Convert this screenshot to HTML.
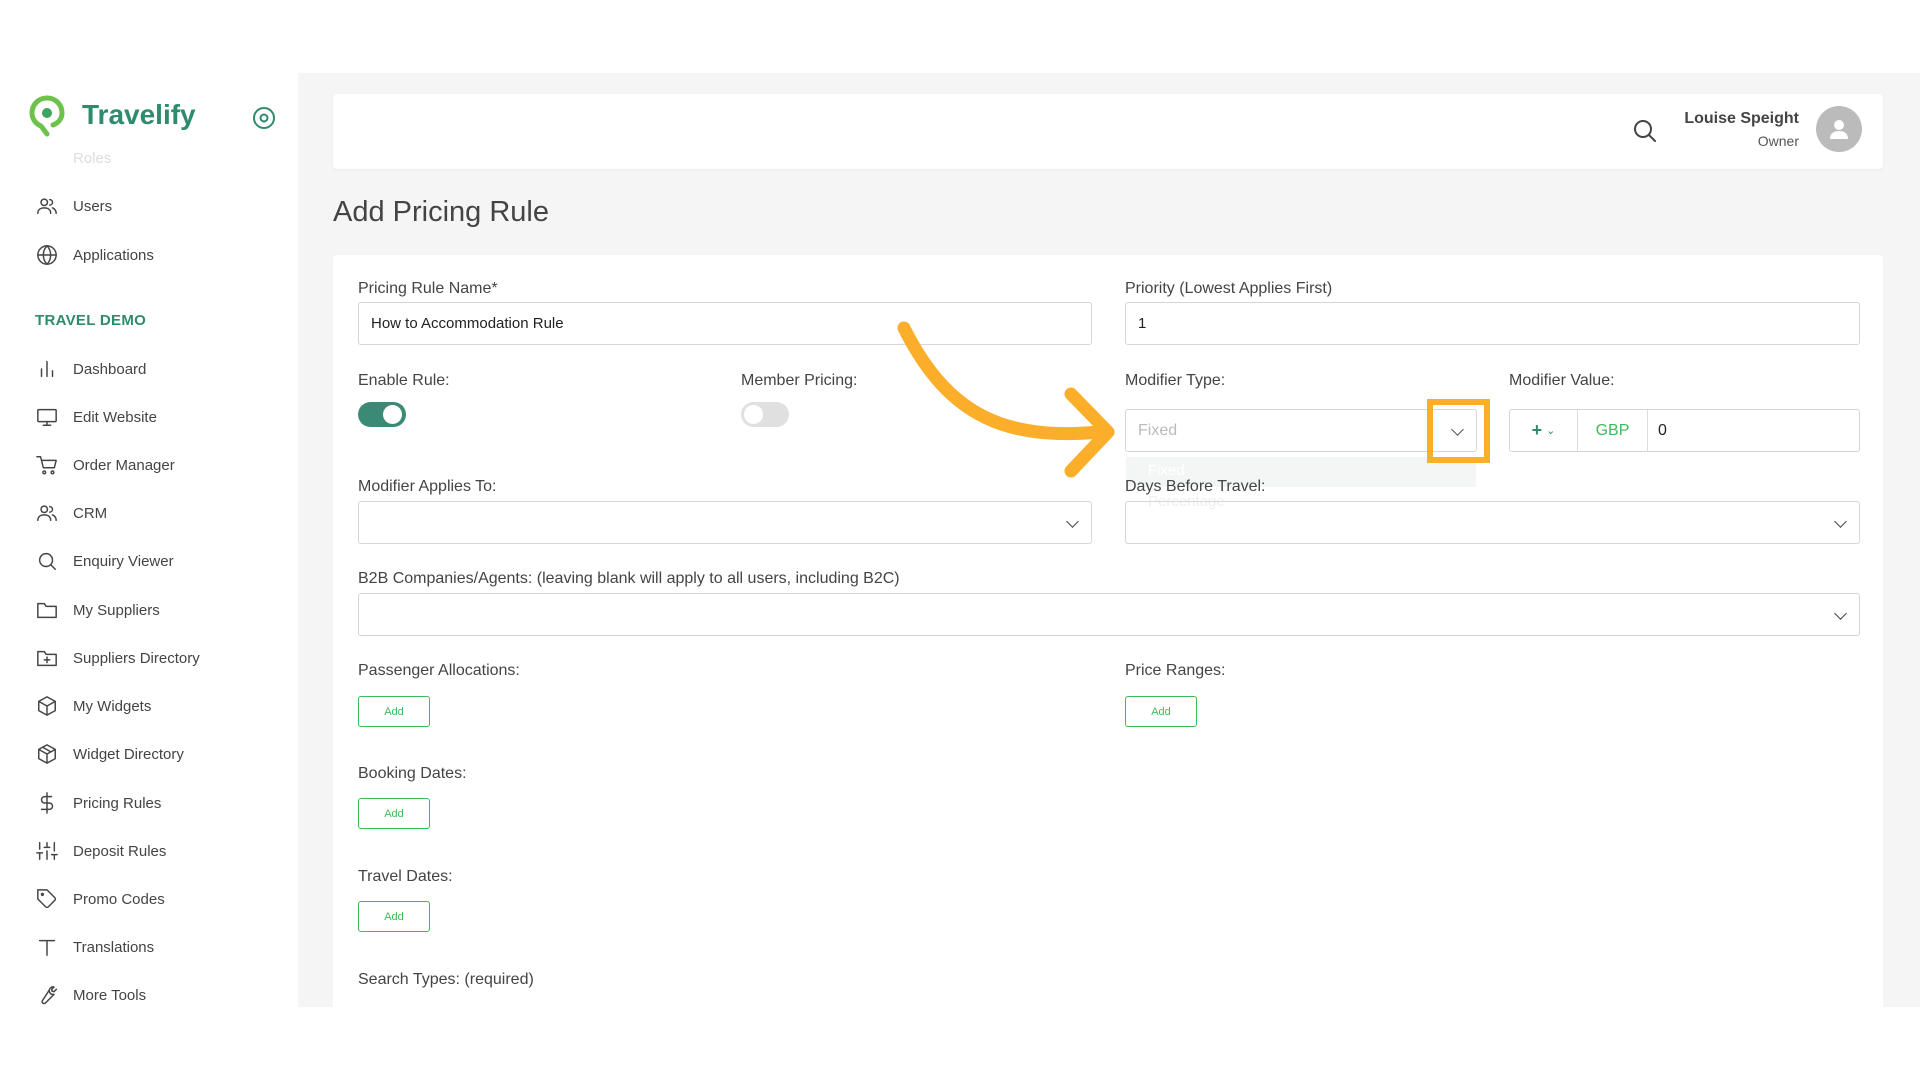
<!DOCTYPE html><html><head><meta charset="utf-8"><style>
*{box-sizing:border-box;margin:0;padding:0}
body{width:1920px;height:1080px;position:relative;background:#fff;font-family:"Liberation Sans",sans-serif;color:#444;overflow:hidden}
.a{position:absolute}
.nav{position:absolute;left:36px;display:flex;align-items:center;font-size:15px;color:#444}
.nav svg{width:22px;height:22px;margin-right:15px;stroke:#444;fill:none;stroke-width:1.6;stroke-linecap:round;stroke-linejoin:round}
.lbl{position:absolute;font-size:16px;color:#444}
.inp{position:absolute;height:43px;border:1px solid #d6d6d6;border-radius:3px;background:#fff;font-size:15px;display:flex;align-items:center;padding-left:12px;color:#222}
.chev{position:absolute;right:14px;top:15px;width:9px;height:9px;border-right:1.8px solid #444;border-bottom:1.8px solid #444;transform:rotate(45deg)}
.btn{position:absolute;width:72px;height:31px;border:1px solid #3dbb5a;border-radius:3px;color:#3dbb5a;font-size:11px;display:flex;align-items:center;justify-content:center;background:#fff}
</style></head><body>
<div class="a" style="left:0;top:73px;width:298px;height:934px;background:#fff"></div>
<div class="a" style="left:298px;top:73px;width:1622px;height:934px;background:#f5f5f5"></div>
<!-- logo -->
<svg class="a" style="left:28px;top:95px" width="38" height="42" viewBox="0 0 38 42"><path d="M19 3C10 3 4 10 4 18c0 6 4 11 9 13l6 8" fill="none" stroke="#6cc24a" stroke-width="5" stroke-linecap="round"/><path d="M19 3c9 0 15 7 15 15 0 6-4 10-9 12" fill="none" stroke="#6cc24a" stroke-width="5" stroke-linecap="round"/><circle cx="19" cy="18" r="5" fill="#3aa55c"/></svg>
<div class="a" style="left:82px;top:99px;font-size:28px;font-weight:bold;color:#2e8b6e">Travelify</div>
<svg class="a" style="left:252px;top:106px" width="24" height="24" viewBox="0 0 24 24"><circle cx="12" cy="12" r="10" fill="none" stroke="#2e8b6e" stroke-width="2"/><circle cx="12" cy="12" r="3.5" fill="none" stroke="#2e8b6e" stroke-width="2"/></svg>
<div class="a" style="left:73px;top:150px;font-size:15px;color:#ddd">Roles</div>
<div class="nav" style="top:195px"><svg viewBox="0 0 24 24"><circle cx="9" cy="8" r="3.5"/><path d="M2 20c0-4 3-6 7-6s7 2 7 6M15 5a3 3 0 0 1 0 6M18 14c2 1 4 3 4 6"/></svg>Users</div>
<div class="nav" style="top:244px"><svg viewBox="0 0 24 24"><circle cx="12" cy="12" r="10"/><path d="M2 12h20M12 2c3 3 4 6 4 10s-1 7-4 10c-3-3-4-6-4-10s1-7 4-10"/></svg>Applications</div>
<div class="a" style="left:35px;top:312px;font-size:15px;color:#2e8b6e;font-weight:bold;letter-spacing:.3px">TRAVEL DEMO</div>
<div class="nav" style="top:358px"><svg viewBox="0 0 24 24"><path d="M6 20V12M12 20V4M18 20v-6"/></svg>Dashboard</div>
<div class="nav" style="top:406px"><svg viewBox="0 0 24 24"><rect x="2" y="4" width="20" height="13" rx="1"/><path d="M8 21h8M12 17v4"/></svg>Edit Website</div>
<div class="nav" style="top:454px"><svg viewBox="0 0 24 24"><path d="M1 3h4l3 12h12l2-8H6"/><circle cx="9" cy="20" r="1.5"/><circle cx="18" cy="20" r="1.5"/></svg>Order Manager</div>
<div class="nav" style="top:502px"><svg viewBox="0 0 24 24"><circle cx="9" cy="8" r="3.5"/><path d="M2 20c0-4 3-6 7-6s7 2 7 6M15 5a3 3 0 0 1 0 6M18 14c2 1 4 3 4 6"/></svg>CRM</div>
<div class="nav" style="top:550px"><svg viewBox="0 0 24 24"><circle cx="11" cy="11" r="7"/><path d="M16 16l5 5"/></svg>Enquiry Viewer</div>
<div class="nav" style="top:599px"><svg viewBox="0 0 24 24"><path d="M2 5h7l2 3h11v12H2z"/></svg>My Suppliers</div>
<div class="nav" style="top:647px"><svg viewBox="0 0 24 24"><path d="M2 5h7l2 3h11v12H2zM12 11v6M9 14h6"/></svg>Suppliers Directory</div>
<div class="nav" style="top:695px"><svg viewBox="0 0 24 24"><path d="M12 2l9 5v10l-9 5-9-5V7zM3 7l9 5 9-5M12 12v10"/></svg>My Widgets</div>
<div class="nav" style="top:743px"><svg viewBox="0 0 24 24"><path d="M12 2l9 5v10l-9 5-9-5V7zM3 7l9 5 9-5M12 12v10M7 4.5l9 5"/></svg>Widget Directory</div>
<div class="nav" style="top:792px"><svg viewBox="0 0 24 24"><path d="M12 1v22M17 5H9.5a3.5 3.5 0 0 0 0 7h5a3.5 3.5 0 0 1 0 7H6"/></svg>Pricing Rules</div>
<div class="nav" style="top:840px"><svg viewBox="0 0 24 24"><path d="M4 21v-7M4 10V3M12 21v-9M12 8V3M20 21v-5M20 12V3M1 14h6M9 8h6M17 16h6"/></svg>Deposit Rules</div>
<div class="nav" style="top:888px"><svg viewBox="0 0 24 24"><path d="M20.6 13.4l-7.2 7.2a2 2 0 0 1-2.8 0L2 12V2h10l8.6 8.6a2 2 0 0 1 0 2.8z"/><circle cx="7" cy="7" r="1"/></svg>Promo Codes</div>
<div class="nav" style="top:936px"><svg viewBox="0 0 24 24"><path d="M4 5h16M12 5v16"/></svg>Translations</div>
<div class="nav" style="top:984px"><svg viewBox="0 0 24 24"><path d="M14.7 6.3a4 4 0 0 0 5 5l-9.4 9.4a2 2 0 0 1-3-3zM14.7 6.3a4 4 0 0 1 5-3l-2.5 2.5.3 2.2 2.2.3 2.5-2.5"/></svg>More Tools</div>
<!-- header -->
<div class="a" style="left:333px;top:94px;width:1550px;height:75px;background:#fff;border-radius:4px;box-shadow:0 1px 3px rgba(0,0,0,.05)"></div>
<svg class="a" style="left:1632px;top:118px" width="26" height="26" viewBox="0 0 26 26"><circle cx="11" cy="11" r="8" fill="none" stroke="#444" stroke-width="2"/><path d="M17 17l6 6" stroke="#444" stroke-width="2" stroke-linecap="round"/></svg>
<div class="a" style="right:121px;top:110px;font-size:16px;font-weight:bold;color:#444">Louise Speight</div>
<div class="a" style="right:121px;top:133px;font-size:14px;color:#555">Owner</div>
<div class="a" style="left:1816px;top:106px;width:46px;height:46px;border-radius:50%;background:#bbb"></div>
<svg class="a" style="left:1826px;top:116px" width="26" height="26" viewBox="0 0 26 26"><circle cx="13" cy="9" r="5" fill="#fff"/><path d="M4 23c0-6 4-8 9-8s9 2 9 8z" fill="#fff"/></svg>
<div class="a" style="left:333px;top:196px;font-size:29px;color:#444">Add Pricing Rule</div>
<!-- card -->
<div class="a" style="left:333px;top:255px;width:1550px;height:760px;background:#fff;border-radius:4px"></div>
<div class="lbl" style="left:358px;top:280px">Pricing Rule Name*</div>
<div class="inp" style="left:358px;top:302px;width:734px">How to Accommodation Rule</div>
<div class="lbl" style="left:1125px;top:280px">Priority (Lowest Applies First)</div>
<div class="inp" style="left:1125px;top:302px;width:735px">1</div>
<div class="lbl" style="left:358px;top:372px">Enable Rule:</div>
<div class="a" style="left:358px;top:402px;width:48px;height:25px;border-radius:13px;background:#3a8a76"></div>
<div class="a" style="left:383px;top:405px;width:19px;height:19px;border-radius:50%;background:#fff"></div>
<div class="lbl" style="left:741px;top:372px">Member Pricing:</div>
<div class="a" style="left:741px;top:402px;width:48px;height:25px;border-radius:13px;background:#e0e0e0"></div>
<div class="a" style="left:744px;top:405px;width:19px;height:19px;border-radius:50%;background:#fff"></div>
<div class="lbl" style="left:1125px;top:372px">Modifier Type:</div>
<div class="inp" style="left:1125px;top:409px;width:352px;color:#bbb;font-size:16px">Fixed<div class="chev" style="border-color:#555"></div></div>
<div class="a" style="left:1126px;top:457px;width:350px;height:30px;background:#f3f6f5"></div>
<div class="a" style="left:1148px;top:462px;font-size:15px;color:#fff">Fixed</div>
<div class="a" style="left:1148px;top:493px;font-size:15px;color:#eee">Percentage</div>
<div class="lbl" style="left:1509px;top:372px">Modifier Value:</div>
<div class="inp" style="left:1509px;top:409px;width:351px;padding:0"><div style="width:68px;height:100%;border-right:1px solid #ddd;display:flex;align-items:center;justify-content:center;color:#2e8b6e;font-weight:bold;font-size:18px">+ <span style="font-size:11px;margin-left:4px;font-weight:normal">&#8964;</span></div><div style="width:70px;height:100%;border-right:1px solid #ddd;display:flex;align-items:center;justify-content:center;color:#3dbb5a;font-size:16px">GBP</div><div style="padding-left:10px;font-size:16px">0</div></div>
<div class="a" style="left:1427px;top:399px;width:63px;height:64px;border:6px solid #fbae2a"></div>
<div class="lbl" style="left:358px;top:478px">Modifier Applies To:</div>
<div class="inp" style="left:358px;top:501px;width:734px"><div class="chev"></div></div>
<div class="lbl" style="left:1125px;top:478px">Days Before Travel:</div>
<div class="inp" style="left:1125px;top:501px;width:735px;background:transparent"><div class="chev"></div></div>
<div class="lbl" style="left:358px;top:570px">B2B Companies/Agents: (leaving blank will apply to all users, including B2C)</div>
<div class="inp" style="left:358px;top:593px;width:1502px"><div class="chev"></div></div>
<div class="lbl" style="left:358px;top:662px">Passenger Allocations:</div>
<div class="btn" style="left:358px;top:696px">Add</div>
<div class="lbl" style="left:1125px;top:662px">Price Ranges:</div>
<div class="btn" style="left:1125px;top:696px">Add</div>
<div class="lbl" style="left:358px;top:765px">Booking Dates:</div>
<div class="btn" style="left:358px;top:798px">Add</div>
<div class="lbl" style="left:358px;top:868px">Travel Dates:</div>
<div class="btn" style="left:358px;top:901px">Add</div>
<div class="lbl" style="left:358px;top:971px">Search Types: (required)</div>
<div class="a" style="left:0;top:1007px;width:1920px;height:73px;background:#fff"></div>
<!-- arrow -->
<svg class="a" style="left:0;top:0" width="1920" height="1080"><path d="M904 328 C 950 420 1010 440 1100 432" fill="none" stroke="#fbae2a" stroke-width="13" stroke-linecap="round"/><path d="M1071 394 L1108 432 L1071 471" fill="none" stroke="#fbae2a" stroke-width="13" stroke-linecap="round" stroke-linejoin="round"/></svg>
</body></html>
